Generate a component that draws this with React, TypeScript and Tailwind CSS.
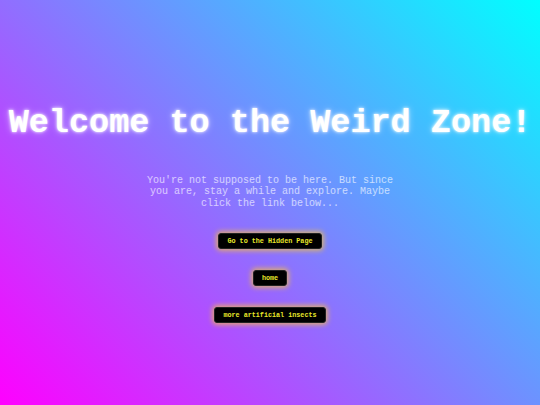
export default function App() {
  const links = ['Go to the Hidden Page', 'home', 'more artificial insects'];

  return (
    <main className="flex min-h-screen w-full flex-col items-center bg-[linear-gradient(45deg,#ff00ff,#00ffff)] pt-[104px] font-['Liberation_Mono','Courier_New',monospace]">
      <h1 className="m-0 whitespace-nowrap text-center text-[33.5px] font-bold leading-[38px] text-white [text-shadow:0_0_3px_#fff,0_0_7px_rgba(255,255,255,0.55)]">
        Welcome to the Weird Zone!
      </h1>
      <p className="mt-[33px] max-w-[260px] text-center text-[10px] leading-[11.4px] text-white/65">
        You're not supposed to be here. But since you are, stay a while and explore. Maybe click the link below...
      </p>
      <nav className="mt-[24px] flex flex-col items-center gap-[21px]">
        {links.map((label) => (
          <a
            key={label}
            href="#"
            className="flex h-[16px] items-center rounded-[3px] border border-[#222] bg-black px-[8px] text-[6.75px] font-bold text-[#e8e82a] no-underline shadow-[0_0_5px_2px_rgba(255,200,40,0.65)]"
          >
            {label}
          </a>
        ))}
      </nav>
    </main>
  );
}
